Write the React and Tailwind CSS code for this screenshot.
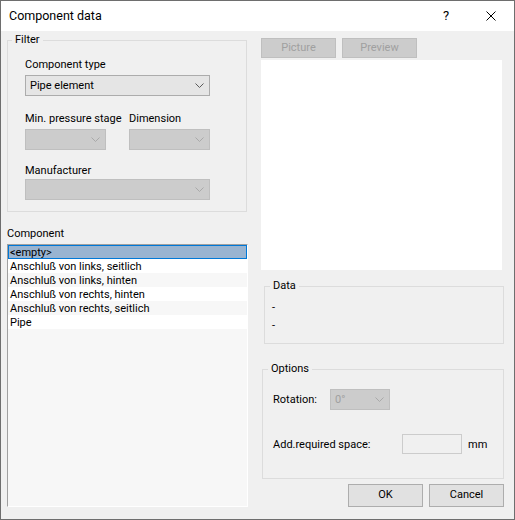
import React from "react";

const FONT = { fontFamily: "Roboto, 'Noto Sans', Arial, sans-serif" };

function Chevron({ disabled }) {
  return (
    <svg width="9" height="5" viewBox="0 0 9 5" className="block">
      <polyline
        points="0.5,0.5 4.5,4.5 8.5,0.5"
        fill="none"
        stroke={disabled ? "#a9a9a9" : "#5a5a5a"}
        strokeWidth="1"
      />
    </svg>
  );
}

function Combo({ width, value, disabled }) {
  return (
    <div
      className={
        "h-[21px] flex items-center justify-between pl-[4px] pr-[5px] border " +
        (disabled
          ? "bg-[#cccccc] border-[#bfbfbf] text-[#a0a0a0]"
          : "bg-[#e5e5e5] border-[#acacac] text-black")
      }
      style={{ width }}
    >
      <span className="leading-[16px]">{value}</span>
      <Chevron disabled={disabled} />
    </div>
  );
}

const items = [
  "<empty>",
  "Anschluß von links, seitlich",
  "Anschluß von links, hinten",
  "Anschluß von rechts, hinten",
  "Anschluß von rechts, seitlich",
  "Pipe",
];

export default function App() {
  return (
    <div
      className="w-[515px] h-[520px] border border-[#6e6e6e] flex flex-col text-[11px] text-black bg-white"
      style={FONT}
    >
      {/* Title bar */}
      <div className="h-[30px] shrink-0 bg-white flex items-center">
        <span className="pl-[8px] text-[12.5px] leading-[18px] flex-1">Component data</span>
        <span className="text-[13px] leading-[16px] w-[10px] text-center mr-[35px]">?</span>
        <svg width="10" height="10" viewBox="0 0 10 10" className="mr-[18px]">
          <path d="M0.5 0.5 L9.5 9.5 M9.5 0.5 L0.5 9.5" stroke="#000" strokeWidth="1" />
        </svg>
      </div>

      {/* Body */}
      <div className="flex-1 bg-[#f0f0f0] flex px-[6px] gap-[14px]">
        {/* Left column */}
        <div className="w-[240px] flex flex-col pb-[12px]">
          <fieldset className="mt-[1px] border border-[#dcdcdc] pl-[17px] pb-[11px] min-w-0">
            <legend className="ml-[-13px] px-[3px] leading-[16px]">Filter</legend>
            <div className="mt-[8px] leading-[18px]">Component type</div>
            <div className="mt-[1px]">
              <Combo width={185} value="Pipe element" />
            </div>
            <div className="mt-[14px] flex gap-[23px]">
              <div className="w-[81px]">
                <div className="leading-[18px] whitespace-nowrap">Min. pressure stage</div>
                <div className="mt-[1px]">
                  <Combo width={81} value="" disabled />
                </div>
              </div>
              <div className="w-[81px]">
                <div className="leading-[18px]">Dimension</div>
                <div className="mt-[1px]">
                  <Combo width={81} value="" disabled />
                </div>
              </div>
            </div>
            <div className="mt-[12px] leading-[17px]">Manufacturer</div>
            <div>
              <Combo width={185} value="" disabled />
            </div>
          </fieldset>

          <div className="mt-[13px] leading-[18px]">Component</div>
          <div className="mt-[1px] flex-1 w-[241px] bg-[#f7f7f7] border border-t-[#a0a0a0] border-l-[#a0a0a0] border-r-white border-b-white">
            {items.map((t, i) => {
              if (i === 0) {
                return (
                  <div
                    key={i}
                    className="h-[14px] leading-[13px] bg-[#99b4d1] border border-[#0078d7] pl-[1px] whitespace-nowrap"
                  >
                    {t}
                  </div>
                );
              }
              return (
                <div
                  key={i}
                  className={
                    "h-[14px] leading-[15px] pl-[2px] whitespace-nowrap " +
                    (i % 2 === 1 ? "bg-white" : "bg-[#f7f7f7]")
                  }
                >
                  {t}
                </div>
              );
            })}
          </div>
        </div>

        {/* Right column */}
        <div className="w-[243px] flex flex-col pt-[7px]">
          <div className="flex gap-[6px]">
            <div className="w-[75px] h-[20px] pt-[1px] bg-[#cccccc] border border-[#bfbfbf] text-[#a0a0a0] flex items-center justify-center">
              Picture
            </div>
            <div className="w-[75px] h-[20px] pt-[1px] bg-[#cccccc] border border-[#bfbfbf] text-[#a0a0a0] flex items-center justify-center">
              Preview
            </div>
          </div>
          <div className="mt-[2px] w-[241px] h-[210px] bg-white" />

          <fieldset className="mt-[8px] ml-[3px] w-[240px] border border-[#dcdcdc] pl-[7px] pb-[9px] min-w-0">
            <legend className="ml-[-2px] px-[3px] leading-[16px]">Data</legend>
            <div className="mt-[5px] leading-[18px]">-</div>
            <div className="leading-[17px]">-</div>
          </fieldset>

          <fieldset className="mt-[17px] ml-[1px] w-[242px] border border-[#dcdcdc] pl-[10px] pb-[24px] min-w-0">
            <legend className="ml-[-5px] px-[3px] leading-[16px]">Options</legend>
            <div className="mt-[12px] flex items-center h-[21px]">
              <span className="w-[57px] leading-[18px] pt-[1px]">Rotation:</span>
              <Combo width={60} value="0°" disabled />
            </div>
            <div className="mt-[24px] flex items-center h-[20px]">
              <span className="w-[129px] whitespace-nowrap leading-[18px] pt-[1px]">Add.required space:</span>
              <div className="w-[60px] h-[20px] border border-[#cccccc] bg-[#f0f0f0]" />
              <span className="ml-[6px] leading-[18px] pt-[1px]">mm</span>
            </div>
          </fieldset>

          <div className="mt-[5px] flex justify-end gap-[6px]">
            <div className="w-[75px] h-[23px] bg-[#e1e1e1] border border-[#adadad] flex items-center justify-center">
              OK
            </div>
            <div className="w-[75px] h-[23px] bg-[#e1e1e1] border border-[#adadad] flex items-center justify-center">
              Cancel
            </div>
          </div>
        </div>
      </div>
    </div>
  );
}
